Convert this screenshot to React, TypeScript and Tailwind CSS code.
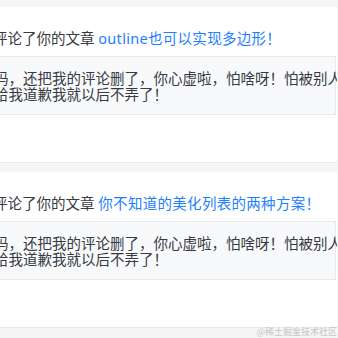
import React from 'react';

const font = { fontFamily: '"Noto Sans", "Noto Sans CJK SC", sans-serif' };

type Item = { title: string; quote: [string, string] };

const items: Item[] = [
  {
    title: 'outline也可以实现多边形！',
    quote: ['吗，还把我的评论删了，你心虚啦，怕啥呀！怕被别人看见吗', '给我道歉我就以后不弄了！'],
  },
  {
    title: '你不知道的美化列表的两种方案！',
    quote: ['吗，还把我的评论删了，你心虚啦，怕啥呀！怕被别人看见吗', '给我道歉我就以后不弄了！'],
  },
];

function CommentCard({ item }: { item: Item }) {
  return (
    <div className="mr-px overflow-hidden border-b border-[#e8e9eb] bg-white pb-[47px] pt-[19px]">
      <p className="-ml-[7px] whitespace-nowrap text-[14.5px] leading-[24px] text-[#373a42]">
        评论了你的文章 <span className="tracking-[0.3px] text-[#1e80ff]">{item.title}</span>
      </p>
      <div className="-ml-[20px] mr-px mt-[6px] whitespace-nowrap border border-[#e8e9ed] bg-[#f8f9fb] pb-[12px] pl-[13px] pt-[13px] text-[14.5px] leading-[16px] text-[#373a42]">
        <p>{item.quote[0]}</p>
        <p>{item.quote[1]}</p>
      </div>
    </div>
  );
}

export default function App() {
  return (
    <div className="relative flex h-[338px] w-[338px] flex-col gap-[9px] overflow-hidden bg-[#f4f5f5] pt-[7px]" style={font}>
      {items.map((item) => (
        <CommentCard key={item.title} item={item} />
      ))}
      <span
        className="absolute bottom-[1px] right-[1px] text-[9px] leading-[10px] text-[#c4c6c9]"
        style={{ fontFamily: '"Noto Sans CJK SC", sans-serif' }}
      >
        @稀土掘金技术社区
      </span>
    </div>
  );
}
